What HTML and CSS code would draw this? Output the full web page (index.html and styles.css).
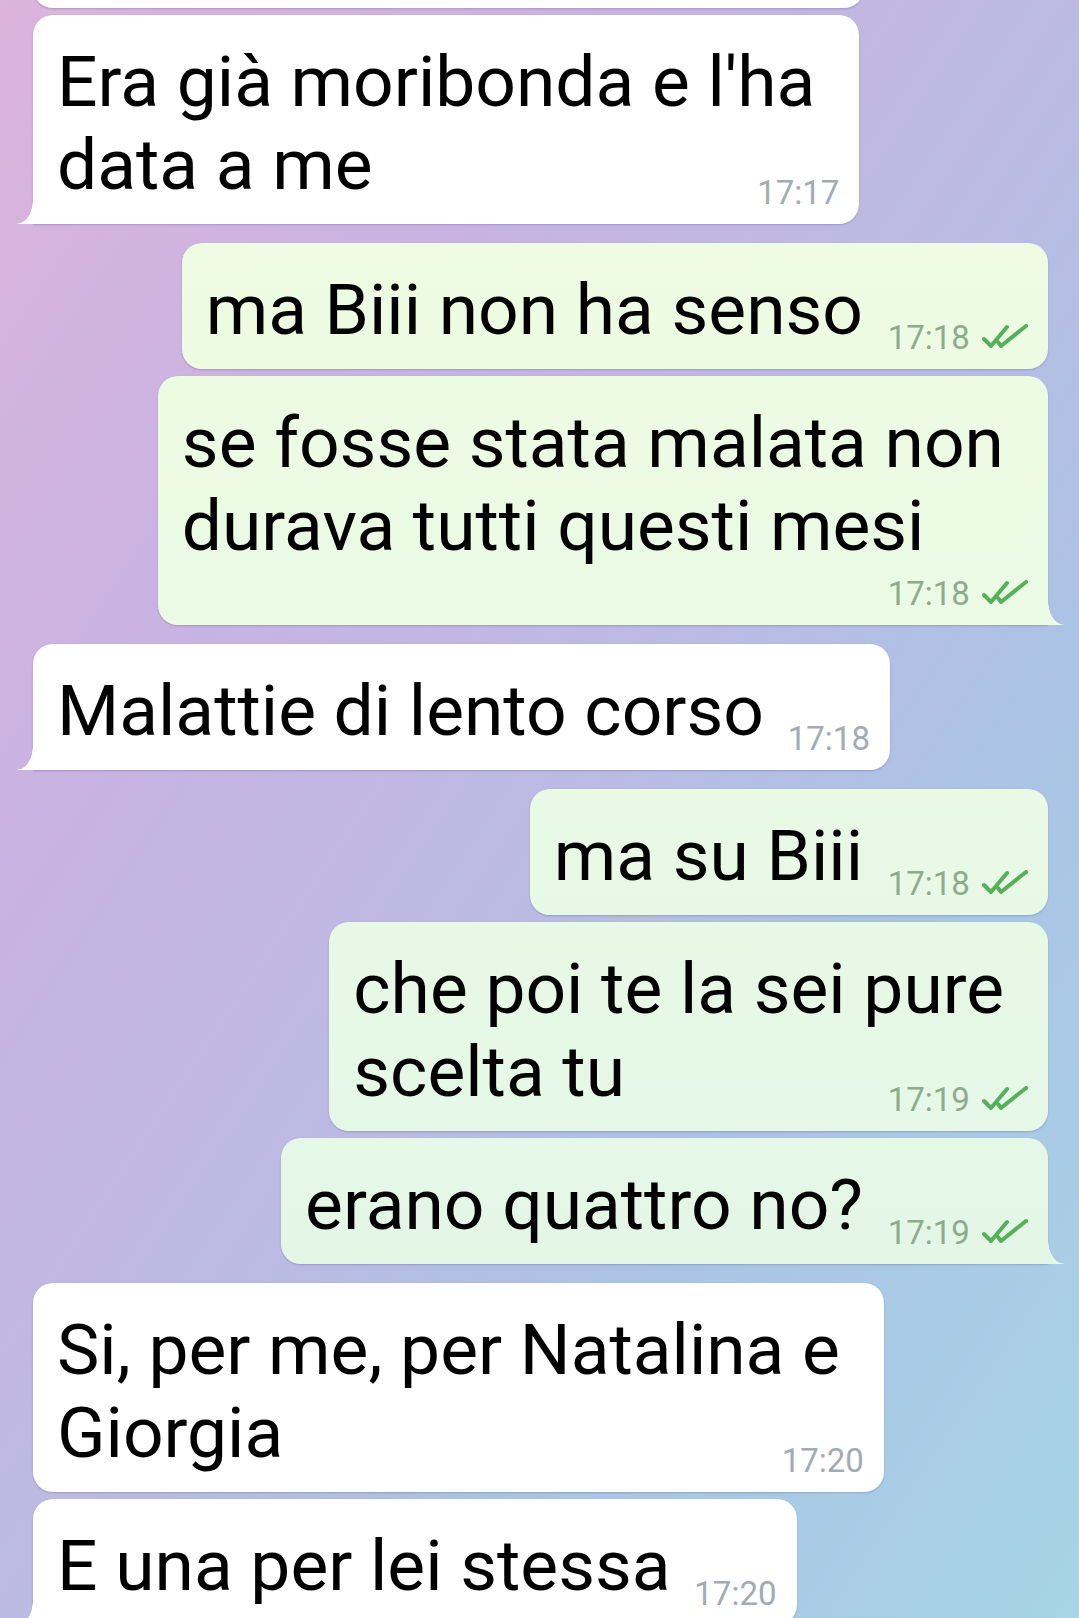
FILE: index.html
```html
<!DOCTYPE html>
<html lang="it">
<head>
  <meta charset="UTF-8">
  <meta name="viewport" content="width=device-width, initial-scale=1.0">
  <title>Chat</title>
  <link rel="stylesheet" href="styles.css">
</head>
<body>
  <div class="chat">
    <div class="msg in cut"></div>

    <div class="msg in multi tail">
      Era già moribonda e l'ha<br>data a me
      <span class="meta">17:17</span>
    </div>

    <div class="msg out single new">
      ma Biii non ha senso
      <span class="meta">17:18 <svg class="ticks" viewBox="0 0 46 25"><path d="M2 15 L9 22 L25 3" /><path d="M16 18 L19 22 L44 2" /></svg></span>
    </div>
    <div class="msg out multi below tail">
      se fosse stata malata non<br>durava tutti questi mesi
      <span class="meta">17:18 <svg class="ticks" viewBox="0 0 46 25"><path d="M2 15 L9 22 L25 3" /><path d="M16 18 L19 22 L44 2" /></svg></span>
    </div>

    <div class="msg in single tail new">
      Malattie di lento corso
      <span class="meta">17:18</span>
    </div>

    <div class="msg out single new">
      ma su Biii
      <span class="meta">17:18 <svg class="ticks" viewBox="0 0 46 25"><path d="M2 15 L9 22 L25 3" /><path d="M16 18 L19 22 L44 2" /></svg></span>
    </div>
    <div class="msg out multi">
      che poi te la sei pure<br>scelta tu
      <span class="meta">17:19 <svg class="ticks" viewBox="0 0 46 25"><path d="M2 15 L9 22 L25 3" /><path d="M16 18 L19 22 L44 2" /></svg></span>
    </div>
    <div class="msg out single tail">
      erano quattro no?
      <span class="meta">17:19 <svg class="ticks" viewBox="0 0 46 25"><path d="M2 15 L9 22 L25 3" /><path d="M16 18 L19 22 L44 2" /></svg></span>
    </div>

    <div class="msg in multi new">
      Si, per me, per Natalina e<br>Giorgia
      <span class="meta">17:20</span>
    </div>
    <div class="msg in single tail">
      E una per lei stessa
      <span class="meta">17:20</span>
    </div>
  </div>
</body>
</html>
```

FILE: styles.css
```css
* {
  margin: 0;
  padding: 0;
  box-sizing: border-box;
}
html, body {
  height: 100%;
}
body {
  font-family: Roboto, 'Noto Sans', sans-serif;
  background: linear-gradient(to bottom right, #dcb4dc 0%, #c8b3e2 28%, #bcbae3 50%, #abc3e5 70%, #a7d4e6 100%);
  overflow: hidden;
}
.chat {
  display: flex;
  flex-direction: column;
  padding: 0 31px 0 33px;
}
.msg {
  position: relative;
  margin-top: 7px;
  padding: 25px 22px 18px 24px;
  font-size: 71.3px;
  line-height: 83px;
  color: #000;
  border-radius: 20px;
  box-shadow: 0 1px 2px rgba(40, 40, 80, 0.22);
}
.msg.new {
  margin-top: 19px;
}
.msg.in {
  align-self: flex-start;
  background: #fff;
}
.msg.out {
  align-self: flex-end;
  background: linear-gradient(#f1fde2, #e0f5e8) fixed;
}
.msg.in.single {
  padding-right: 126px;
}
.msg.out.single {
  padding-right: 185px;
}
.msg.multi {
  padding-right: 44px;
}
.msg.below {
  padding-bottom: 58px;
}
.msg.cut {
  width: 831px;
  height: 60px;
  margin-top: -52px;
  padding: 0;
}

/* bubble tails */
.msg.in.tail {
  border-bottom-left-radius: 0;
}
.msg.out.tail {
  border-bottom-right-radius: 0;
}
.msg.tail::after {
  content: '';
  position: absolute;
  bottom: 0;
  width: 16px;
  height: 24px;
  background: inherit;
}
.msg.in.tail::after {
  left: -16px;
  -webkit-mask-image: radial-gradient(ellipse 16px 24px at 0 0, transparent 97%, #000 100%);
  mask-image: radial-gradient(ellipse 16px 24px at 0 0, transparent 97%, #000 100%);
}
.msg.out.tail::after {
  right: -16px;
  -webkit-mask-image: radial-gradient(ellipse 16px 24px at 100% 0, transparent 97%, #000 100%);
  mask-image: radial-gradient(ellipse 16px 24px at 100% 0, transparent 97%, #000 100%);
}

/* time + ticks */
.meta {
  position: absolute;
  right: 20px;
  bottom: 15px;
  font-size: 33px;
  line-height: 33px;
  white-space: nowrap;
  color: #a3abb2;
}
.msg.out .meta {
  color: #8fab8d;
}
.ticks {
  width: 46px;
  height: 25px;
  margin-left: 4px;
  vertical-align: baseline;
  fill: none;
  stroke: #56b05a;
  stroke-width: 4;
  stroke-linecap: round;
  stroke-linejoin: round;
}
```
